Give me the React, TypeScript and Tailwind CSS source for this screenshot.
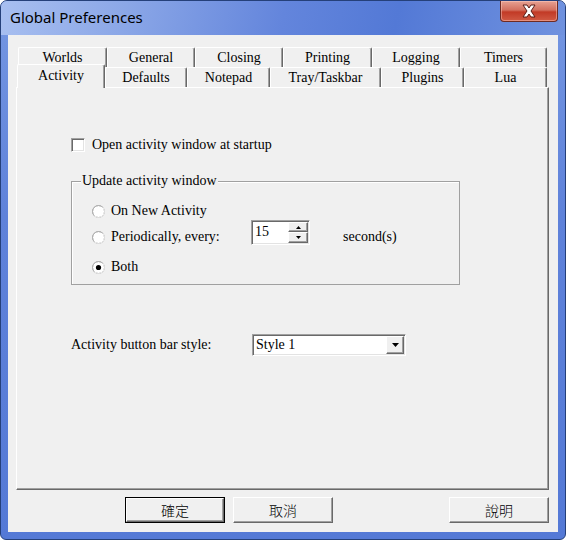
import React from "react";

function TopTab({ label, cls }: { label: string; cls: string }) {
  return (
    <div
      className={`${cls} h-[20px] shrink-0 bg-[#f0f0f0] border-t border-l border-white border-r border-r-[#696969] shadow-[inset_-1px_0_0_#a0a0a0] rounded-tl-[2px] rounded-tr-[2px] flex items-center justify-center text-[14px] leading-[16px] text-black`}
    >
      {label}
    </div>
  );
}

function SelTab({ label, cls }: { label: string; cls: string }) {
  return (
    <div
      className={`${cls} relative z-10 h-[24px] -mb-[1px] shrink-0 bg-[#f0f0f0] border-t border-l border-white border-r border-r-[#696969] shadow-[inset_-1px_0_0_#a0a0a0] rounded-tl-[2px] rounded-tr-[2px] flex items-start justify-center pt-[3px] text-[14px] leading-[16px] text-black`}
    >
      {label}
    </div>
  );
}

function Radio({ checked }: { checked?: boolean }) {
  return (
    <svg width="13" height="13" viewBox="0 0 13 13" className="shrink-0">
      <circle cx="6.5" cy="6.5" r="6" fill="#ffffff" stroke="#a0a0a0" strokeWidth="1" />
      <path d="M2.3 10.7 A5 5 0 0 1 10.7 2.3" fill="none" stroke="#b4b4b4" strokeWidth="1" />
      <path d="M10.7 2.3 A5 5 0 0 1 2.3 10.7" fill="none" stroke="#ececec" strokeWidth="1" />
      {checked && <circle cx="6.5" cy="6.5" r="2.6" fill="#000000" />}
    </svg>
  );
}

function Arrow({ down }: { down?: boolean }) {
  return (
    <svg width="5" height="3" viewBox="0 0 5 3">
      {down ? <path d="M0 0 H5 L2.5 3 Z" fill="#000" /> : <path d="M0 3 H5 L2.5 0 Z" fill="#000" />}
    </svg>
  );
}

export default function App() {
  return (
    <div className="w-[566px] h-[540px] bg-white">
      <div className="w-[566px] h-[540px] flex flex-col border border-[#25407a] rounded-t-[7px] rounded-b-[6px] overflow-hidden bg-[linear-gradient(180deg,#7597e2_0%,#5f82da_40%,#5479d6_100%)]">
        {/* Title bar */}
        <div className="h-[34px] shrink-0 flex items-start bg-[linear-gradient(100deg,#a8bff0_0%,#8ba7e7_22%,#6385dc_50%,#5379d6_70%,#7092df_100%)]">
          <div className="pl-[9px] pt-[6px] text-[15px] leading-[20px] text-black font-['Noto_Sans',sans-serif]">
            Global Preferences
          </div>
          <div className="ml-auto mr-[7px] w-[58px] h-[21px] rounded-b-[4px] border border-t-0 border-[#6e2a22] bg-[linear-gradient(180deg,#e7a293_0%,#d3705f_45%,#c23a26_55%,#d05a44_100%)] shadow-[inset_0_0_0_1px_rgba(255,210,200,0.45)] flex items-center justify-center">
            <svg width="20" height="14" viewBox="0 0 20 14">
              <path
                d="M4 1 H8 L10 4 L12 1 H16 L12 7 L16 13 H12 L10 10 L8 13 H4 L8 7 Z"
                fill="#ffffff"
                stroke="#5a1d16"
                strokeWidth="1"
                strokeLinejoin="round"
              />
            </svg>
          </div>
        </div>

        {/* Client area */}
        <div className="mx-[7px] mb-[7px] h-[497px] shrink-0 bg-[#f0f0f0] flex flex-col pt-[12px] text-black font-['Liberation_Serif',serif]">
          {/* Tab control */}
          <div className="ml-[8px] w-[533px] flex flex-col">
            <div className="h-[20px] flex pl-[2px]">
              <TopTab label="Worlds" cls="w-[89px]" />
              <TopTab label="General" cls="w-[88px]" />
              <TopTab label="Closing" cls="w-[88px]" />
              <TopTab label="Printing" cls="w-[89px]" />
              <TopTab label="Logging" cls="w-[88px]" />
              <TopTab label="Timers" cls="w-[87px]" />
            </div>
            <div className="h-[20px] flex items-end pl-[1px]">
              <SelTab label="Activity" cls="w-[88px]" />
              <TopTab label="Defaults" cls="w-[82px]" />
              <TopTab label="Notepad" cls="w-[83px]" />
              <TopTab label="Tray/Taskbar" cls="w-[111px]" />
              <TopTab label="Plugins" cls="w-[83px]" />
              <TopTab label="Lua" cls="w-[83px]" />
            </div>
            {/* Panel */}
            <div className="h-[403px] border-t border-l border-white border-r border-b border-r-[#696969] border-b-[#696969] shadow-[inset_-1px_-1px_0_#a0a0a0] pl-[54px] pt-[49px] flex flex-col text-[14px] leading-[16px]">
              {/* Checkbox row */}
              <div className="h-[15px] flex items-center">
                <div className="w-[14px] h-[14px] bg-white border-t border-l border-[#a0a0a0] border-r border-b border-r-white border-b-white shadow-[inset_1px_1px_0_#696969,inset_-1px_-1px_0_#e3e3e3]" />
                <span className="ml-[7px]">Open activity window at startup</span>
              </div>

              {/* Group box */}
              <div className="relative mt-[29px] w-[389px] h-[104px] border border-[#a0a0a0] shadow-[inset_1px_1px_0_#ffffff] pl-[20px] pt-[22px] flex flex-col">
                <span className="absolute left-[9px] -top-[9px] px-[1px] bg-[#f0f0f0] leading-[16px]">
                  Update activity window
                </span>
                <div className="h-[14px] flex items-center gap-[6px]">
                  <Radio />
                  <span>On New Activity</span>
                </div>
                <div className="mt-[2px] h-[25px] flex items-start">
                  <div className="mt-[10px] w-[159px] h-[14px] flex items-center gap-[6px]">
                    <Radio />
                    <span>Periodically, every:</span>
                  </div>
                  <div className="w-[59px] h-[25px] flex bg-white border-t border-l border-[#a0a0a0] border-r border-b border-r-white border-b-white shadow-[inset_1px_1px_0_#696969,inset_-1px_-1px_0_#e3e3e3]">
                    <div className="flex-1 pl-[3px] pt-[3px] leading-[16px]">15</div>
                    <div className="w-[20px] mt-[1px] mr-[1px] mb-[1px] flex flex-col">
                      <div className="h-[10px] bg-[#f0f0f0] border-t border-l border-white border-r border-b border-r-[#696969] border-b-[#696969] shadow-[inset_-1px_-1px_0_#a0a0a0] flex items-center justify-center">
                        <Arrow />
                      </div>
                      <div className="h-[11px] bg-[#f0f0f0] border-t border-l border-white border-r border-b border-r-[#696969] border-b-[#696969] shadow-[inset_-1px_-1px_0_#a0a0a0] flex items-center justify-center">
                        <Arrow down />
                      </div>
                    </div>
                  </div>
                  <span className="ml-[33px] mt-[9px]">second(s)</span>
                </div>
                <div className="mt-[15px] h-[14px] flex items-center gap-[6px]">
                  <Radio checked />
                  <span>Both</span>
                </div>
              </div>

              {/* Combo row */}
              <div className="mt-[49px] h-[22px] flex items-center">
                <span className="w-[181px]">Activity button bar style:</span>
                <div className="w-[154px] h-[22px] flex bg-white border-t border-l border-[#a0a0a0] border-r border-b border-r-white border-b-white shadow-[inset_1px_1px_0_#696969,inset_-1px_-1px_0_#e3e3e3]">
                  <div className="flex-1 pl-[3px] pt-[2px] leading-[16px]">Style 1</div>
                  <div className="w-[18px] mt-[1px] mr-[1px] mb-[1px] bg-[#f0f0f0] border-t border-l border-white border-r border-b border-r-[#696969] border-b-[#696969] shadow-[inset_-1px_-1px_0_#a0a0a0] flex items-center justify-center">
                    <svg width="7" height="4" viewBox="0 0 7 4">
                      <path d="M0 0 H7 L3.5 4 Z" fill="#000" />
                    </svg>
                  </div>
                </div>
              </div>
            </div>
          </div>

          {/* Buttons */}
          <div className="mt-[7px] h-[26px] flex pl-[117px] pr-[9px] text-[14px] leading-[16px] font-['Noto_Sans_CJK_TC','Noto_Sans_CJK_SC',sans-serif] font-light">
            <div className="w-[100px] h-[26px] border border-black flex">
              <div className="flex-1 bg-[#f0f0f0] border-t border-l border-white border-r border-b border-r-[#696969] border-b-[#696969] shadow-[inset_-1px_-1px_0_#a0a0a0] flex items-center justify-center">
                確定
              </div>
            </div>
            <div className="ml-[8px] w-[100px] h-[26px] bg-[#f0f0f0] border-t border-l border-white border-r border-b border-r-[#696969] border-b-[#696969] shadow-[inset_-1px_-1px_0_#a0a0a0] flex items-center justify-center">
              取消
            </div>
            <div className="ml-auto w-[100px] h-[26px] bg-[#f0f0f0] border-t border-l border-white border-r border-b border-r-[#696969] border-b-[#696969] shadow-[inset_-1px_-1px_0_#a0a0a0] flex items-center justify-center">
              說明
            </div>
          </div>
        </div>
      </div>
    </div>
  );
}
